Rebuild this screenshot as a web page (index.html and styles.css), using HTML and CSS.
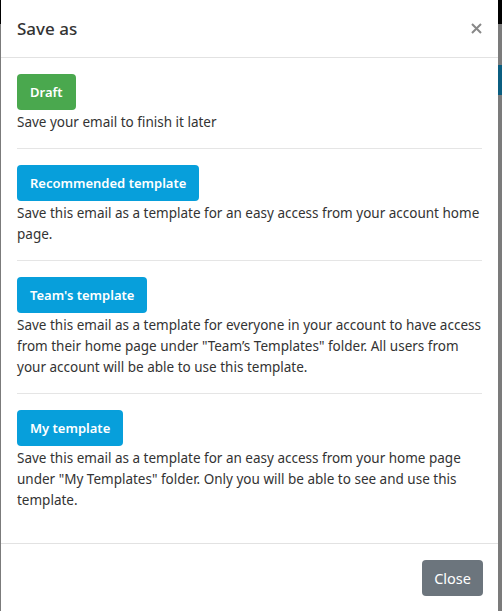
FILE: index.html
```html
<!DOCTYPE html>
<html>
<head>
    <title>Save as</title>
    <link rel="stylesheet" href="styles.css">
</head>
<body>
    <div class="modal">
        <div class="modal-header">
            <h5 class="modal-title">Save as</h5>
            <button type="button" class="close" aria-label="Close">
                <svg width="11" height="11" viewBox="0 0 11 11"><path d="M1 1L10 10M10 1L1 10" stroke="#888" stroke-width="2"/></svg>
            </button>
        </div>

        <div class="modal-body">
            <div class="option">
                <button type="button" class="btn btn-green">Draft</button>
                <p>Save your email to finish it later</p>
            </div>
            <div class="option">
                <button type="button" class="btn btn-blue">Recommended template</button>
                <p>Save this email as a template for an easy access from your account home page.</p>
            </div>
            <div class="option">
                <button type="button" class="btn btn-blue">Team's template</button>
                <p>Save this email as a template for everyone in your account to have access from their home page under "Team’s Templates" folder. All users from your account will be able to use this template.</p>
            </div>
            <div class="option">
                <button type="button" class="btn btn-blue">My template</button>
                <p>Save this email as a template for an easy access from your home page under "My Templates" folder. Only you will be able to see and use this template.</p>
            </div>
        </div>

        <div class="modal-footer">
            <button type="button" class="btn btn-gray">Close</button>
        </div>
    </div>
</body>
</html>
```

FILE: styles.css
```css
body {
    margin: 0;
    font-family: "Noto Sans", "Open Sans", sans-serif;
    color: #333;
    background:
        linear-gradient(#0b5e80, #0b5e80) right 65px / 4px 30px no-repeat,
        linear-gradient(#000 0, #000 24px, transparent 24px),
        #7b7b7b;
}

.modal {
    margin: 0 4px 0 1px;
    background-color: #fff;
}

.modal-header {
    display: flex;
    align-items: center;
    justify-content: space-between;
    height: 58px;
    padding: 0 16px;
    border-bottom: 1px solid #e2e2e2;
    box-sizing: border-box;
}

.modal-title {
    margin: 0;
    font-size: 17px;
    font-weight: 500;
    color: #333;
}

.close {
    display: flex;
    padding: 0;
    background: none;
    border: none;
    cursor: pointer;
}

.modal-body {
    padding: 16px 16px 32px;
}

.option {
    padding-bottom: 15px;
    margin-bottom: 16px;
    border-bottom: 1px solid #e5e5e5;
}

.option:last-child {
    padding-bottom: 0;
    margin-bottom: 0;
    border-bottom: none;
}

.option p {
    margin: 0;
    padding-top: 2px;
    font-size: 13.5px;
    line-height: 21px;
}

.btn {
    display: block;
    height: 36px;
    padding: 0 13px;
    font-family: inherit;
    font-size: 13px;
    font-weight: 600;
    color: #fff;
    border: none;
    border-radius: 4px;
    cursor: pointer;
}

.btn-green {
    background-color: #4aa84e;
}

.btn-blue {
    background-color: #079fdb;
}

.btn-gray {
    padding: 0 12px;
    font-size: 14.5px;
    font-weight: 400;
    background-color: #6c757d;
}

.modal-footer {
    display: flex;
    justify-content: flex-end;
    padding: 16px 15px 16px 16px;
    border-top: 1px solid #e2e2e2;
}
```
